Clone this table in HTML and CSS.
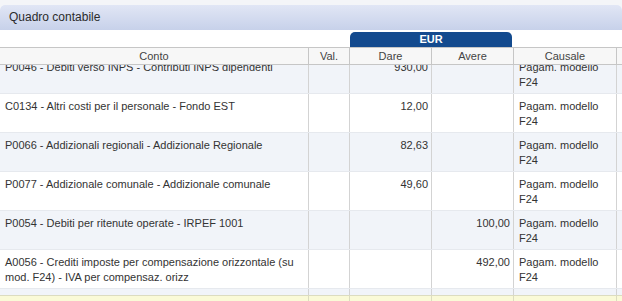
FILE: index.html
```html
<!DOCTYPE html>
<html lang="it">
<head>
<meta charset="utf-8">
<title>Quadro contabile</title>
<link rel="stylesheet" href="styles.css">
</head>
<body>
<div class="panel">
  <div class="panel-head">Quadro contabile</div>
  <div class="currency-row">
    <div class="currency-spacer"></div>
    <div class="currency-tab">EUR</div>
  </div>
  <div class="grid head-row">
    <div class="cell">Conto</div>
    <div class="cell">Val.</div>
    <div class="cell">Dare</div>
    <div class="cell">Avere</div>
    <div class="cell">Causale</div>
    <div class="cell last"></div>
  </div>
  <div class="body-scroll">
    <div class="body-inner">
      <div class="grid row alt">
        <div class="cell">P0046 - Debiti verso INPS - Contributi INPS dipendenti</div>
        <div class="cell"></div>
        <div class="cell num">930,00</div>
        <div class="cell num"></div>
        <div class="cell">Pagam. modello F24</div>
        <div class="cell last"></div>
      </div>
      <div class="grid row">
        <div class="cell">C0134 - Altri costi per il personale - Fondo EST</div>
        <div class="cell"></div>
        <div class="cell num">12,00</div>
        <div class="cell num"></div>
        <div class="cell">Pagam. modello F24</div>
        <div class="cell last"></div>
      </div>
      <div class="grid row alt">
        <div class="cell">P0066 - Addizionali regionali - Addizionale Regionale</div>
        <div class="cell"></div>
        <div class="cell num">82,63</div>
        <div class="cell num"></div>
        <div class="cell">Pagam. modello F24</div>
        <div class="cell last"></div>
      </div>
      <div class="grid row">
        <div class="cell">P0077 - Addizionale comunale - Addizionale comunale</div>
        <div class="cell"></div>
        <div class="cell num">49,60</div>
        <div class="cell num"></div>
        <div class="cell">Pagam. modello F24</div>
        <div class="cell last"></div>
      </div>
      <div class="grid row alt">
        <div class="cell">P0054 - Debiti per ritenute operate - IRPEF 1001</div>
        <div class="cell"></div>
        <div class="cell num"></div>
        <div class="cell num">100,00</div>
        <div class="cell">Pagam. modello F24</div>
        <div class="cell last"></div>
      </div>
      <div class="grid row">
        <div class="cell">A0056 - Crediti imposte per compensazione orizzontale (su mod. F24) - IVA per compensaz. orizz</div>
        <div class="cell"></div>
        <div class="cell num"></div>
        <div class="cell num">492,00</div>
        <div class="cell">Pagam. modello F24</div>
        <div class="cell last"></div>
      </div>
      <div class="grid row alt">
        <div class="cell"></div>
        <div class="cell"></div>
        <div class="cell num"></div>
        <div class="cell num"></div>
        <div class="cell"></div>
        <div class="cell last"></div>
      </div>
    </div>
  </div>
  <div class="grid foot-row">
    <div class="cell"></div>
    <div class="cell"></div>
    <div class="cell num"></div>
    <div class="cell num"></div>
    <div class="cell"></div>
    <div class="cell last"></div>
  </div>
</div>
</body>
</html>
```
FILE: styles.css
```css
html, body {
  margin: 0;
  padding: 0;
}
body {
  background: #f4f5f8;
  font-family: "Liberation Sans", Arial, sans-serif;
  font-size: 11px;
  color: #333;
  width: 622px;
  height: 301px;
  overflow: hidden;
}
.panel {
  margin-top: 5px;
  background: #fff;
  border-radius: 5px 5px 0 0;
  overflow: hidden;
}
.panel-head {
  height: 25px;
  line-height: 25px;
  padding-left: 9px;
  font-size: 12px;
  color: #2b2b2b;
  background: linear-gradient(#e1e6f5, #c7d1ea);
}
.currency-row {
  height: 17px;
  display: flex;
  align-items: flex-end;
  background: #fff;
}
.currency-spacer {
  width: 350px;
}
.currency-tab {
  width: 162px;
  height: 15px;
  line-height: 15px;
  background: #134a8e;
  color: #fff;
  font-weight: bold;
  font-size: 11px;
  text-align: center;
  border-radius: 5px 5px 0 0;
}
.grid {
  display: grid;
  grid-template-columns: 309px 41px 82px 82px 103px 1fr;
}
.cell {
  border-right: 1px solid #d3d3d3;
  box-sizing: border-box;
  padding: 5px 4px 0 5px;
  line-height: 15px;
  overflow: hidden;
}
.cell.last {
  border-right: none;
}
.cell.num {
  text-align: right;
  padding-right: 3px;
}
.head-row {
  height: 18px;
  border-top: 1px solid #c6c6c6;
  border-bottom: 1px solid #c6c6c6;
  box-sizing: border-box;
  background: #f7f7f7;
  color: #444;
}
.head-row .cell {
  padding: 0;
  line-height: 16px;
  text-align: center;
  border-right-color: #c6c6c6;
}
.body-scroll {
  height: 230px;
  overflow: hidden;
}
.body-inner {
  margin-top: -10px;
}
.row {
  height: 39px;
  box-sizing: border-box;
  border-bottom: 1px solid #e6e9ee;
  background: #fff;
}
.row.alt {
  background: #f1f4f9;
}
.foot-row {
  height: 12px;
  border-top: 1px solid #dcdcc0;
  background: #fafad7;
}
.foot-row .cell {
  border-right-color: #dcdcc0;
}
```
